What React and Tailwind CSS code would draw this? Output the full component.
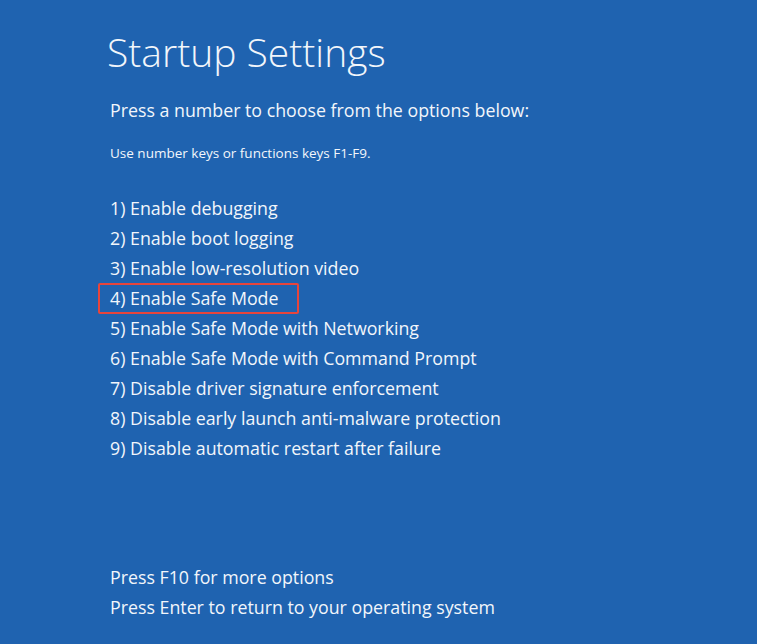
import React from "react";

const options = [
  "1) Enable debugging",
  "2) Enable boot logging",
  "3) Enable low-resolution video",
  "4) Enable Safe Mode",
  "5) Enable Safe Mode with Networking",
  "6) Enable Safe Mode with Command Prompt",
  "7) Disable driver signature enforcement",
  "8) Disable early launch anti-malware protection",
  "9) Disable automatic restart after failure",
];

export default function App() {
  return (
    <div
      className="w-[757px] h-[644px] bg-[#1f63b0] text-[#f2f6fb] overflow-hidden flex flex-col pl-[110px] pt-[28px]"
      style={{ fontFamily: '"Open Sans", "Noto Sans", sans-serif' }}
    >
      <h1 className="text-[39px] font-light leading-[48px] -ml-[3px]">Startup Settings</h1>
      <p className="mt-[22px] text-[17.8px] leading-[24px]">Press a number to choose from the options below:</p>
      <p className="mt-[23px] text-[13.5px] leading-[16px]">Use number keys or functions keys F1-F9.</p>

      <ul className="mt-[32px] flex flex-col">
        {options.map((o, i) => (
          <li key={o} className="h-[30px] flex items-center text-[17.8px]">
            {i === 3 ? (
              <span className="-ml-[12px] pl-[10px] w-[201px] h-[31px] flex items-center border-2 border-[#e6453c] rounded-[2px]">
                {o}
              </span>
            ) : (
              o
            )}
          </li>
        ))}
      </ul>

      <div className="mt-auto mb-[22px] flex flex-col">
        <div className="h-[30px] flex items-center text-[17.8px]">Press F10 for more options</div>
        <div className="h-[30px] flex items-center text-[17.8px]">Press Enter to return to your operating system</div>
      </div>
    </div>
  );
}
